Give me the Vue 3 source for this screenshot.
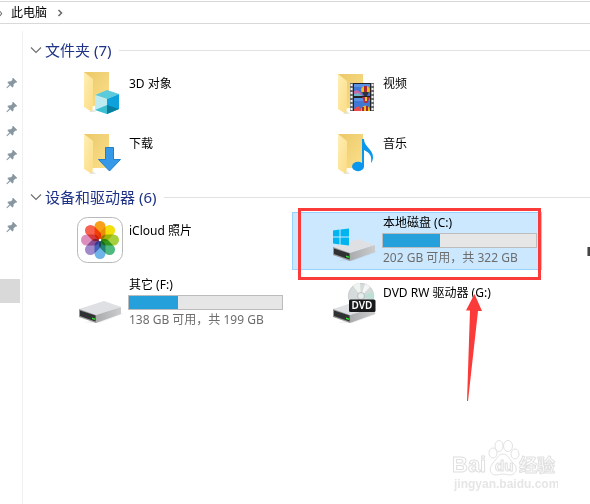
<script setup>
import { ref } from "vue";

const pins = 7;

const folders = [
  { name: "3D 对象", icon: "cube", view: "0 0 48 48" },
  { name: "视频", icon: "video", view: "0 -2 48 48" },
  { name: "下载", icon: "download", view: "0 -2 48 48" },
  { name: "音乐", icon: "music", view: "0 -2 48 48" },
];

const devices = [
  { name: "iCloud 照片", icon: "photos" },
  { name: "本地磁盘 (C:)", icon: "system", used: 37, info: "202 GB 可用，共 322 GB", marked: true },
  { name: "其它 (F:)", icon: "drive", used: 32, info: "138 GB 可用，共 199 GB" },
  { name: "DVD RW 驱动器 (G:)", icon: "dvd", arrow: true },
];

const petals = ["#f9a01b", "#f2df0c", "#a5cf3c", "#4fba80", "#6fb4e8", "#a08acb", "#dc8fbd", "#f7634f"];

const selected = ref("本地磁盘 (C:)");
const showFolders = ref(true);
const showDevices = ref(true);
</script>

<template>
  <div class="explorer">
    <nav class="address">
      <span class="address-edge">›</span>
      <a class="address-link" href="#">此电脑</a>
      <svg class="address-arrow" viewBox="0 0 6 8">
        <path d="M1.5 1 4.5 4 1.5 7" fill="none" stroke="#6b6b6b" stroke-width="1.6" />
      </svg>
    </nav>

    <div class="body">
      <aside class="sidebar">
        <svg v-for="n in pins" :key="n" class="pin" viewBox="0 0 12 12">
          <path
            d="M7 1 11 5 9.8 5.6 9.3 5.4 7.4 7.3 7.2 9.6 6.4 10.2 4.3 8 1.2 11 .8 10.6 3.6 7.4 1.7 5.5 2.5 4.7 5 4.6 6.7 2.8 6.4 2z"
            fill="#8796a0"
            stroke="#8796a0"
            stroke-width=".5"
          />
        </svg>
        <div class="sidebar-current"></div>
      </aside>

      <main class="content">
        <section class="group">
          <h2 class="group-title">
            <button class="group-toggle" type="button" :aria-expanded="showFolders" @click="showFolders = !showFolders">
              <svg class="chevron" viewBox="0 0 12 8">
                <path d="M1 1.5 6 6.5 11 1.5" fill="none" stroke="#6d6d6d" stroke-width="1.1" />
              </svg>
              文件夹 (7)
            </button>
          </h2>
          <div v-if="showFolders" class="items">
            <button
              v-for="folder in folders"
              :key="folder.name"
              class="item"
              :class="{ selected: selected === folder.name }"
              type="button"
              @click="selected = folder.name"
            >
              <svg class="icon" :viewBox="folder.view">
                <defs>
                  <linearGradient :id="'back-' + folder.icon" x1="0" y1="0" x2="1" y2="1">
                    <stop offset="0" stop-color="#ebc868" />
                    <stop offset="1" stop-color="#fbe08c" />
                  </linearGradient>
                  <linearGradient :id="'flap-' + folder.icon" x1="0" y1="0" x2="1" y2="1">
                    <stop offset="0" stop-color="#ffeeb5" />
                    <stop offset="1" stop-color="#fbdc83" />
                  </linearGradient>
                </defs>
                <path d="M13 44h7l-3-3z" fill="#e8e8e8" />
                <path d="M8 4h25v34H8z" :fill="`url(#back-${folder.icon})`" />
                <path d="M8 4 17 11V37L16 44 8 39z" :fill="`url(#flap-${folder.icon})`" />
                <g v-if="folder.icon === 'cube'">
                  <path d="M19 27 31 22 43 26 31 31z" fill="#5bcbdc" />
                  <path d="M19 27 31 31V46L19 42z" fill="#bcecf2" />
                  <path d="M31 31 43 26V41L31 46z" fill="#0da2dc" />
                  <path d="M19 42 31 37V46z" fill="#3dbfd2" />
                  <path d="M31 37 43 41 31 46z" fill="#087f9f" />
                </g>
                <g v-else-if="folder.icon === 'video'">
                  <path d="M20 13h24v28H20z" fill="#6a6a6a" />
                  <path d="M23 13h18v28H23z" fill="#202225" />
                  <path d="M24 14h16v12H24zM24 28h16v13H24z" fill="#3f77d4" />
                  <path d="M24 14h16v3H24zM24 28h16v3H24z" fill="#5c92e6" />
                  <path d="M24 21l3-1 3 2 3 4h-9z" fill="#c967a7" />
                  <path d="M24 24l4-1 4 3h-8z" fill="#6bb8c9" />
                  <path d="M24 39l4-3 5 5h-9z" fill="#ed4b4a" />
                  <ellipse cx="35.5" cy="20" rx="4.5" ry="4" fill="#f2bd20" />
                  <path d="M34 16h3v8h-3z" fill="#aa2834" />
                  <path d="M32 22h7l-2 4h-3z" fill="#343241" />
                  <path d="M32 27h8l-2.5 6h-3z" fill="#b42e43" />
                  <path d="M35 27h2v4h-2z" fill="#f3c929" />
                  <path d="M31 41c0-7 9-7 9 0z" fill="#f0bd22" />
                  <path d="M32 37h2v4h-2zM36 36h2v5h-2z" fill="#a92936" />
                  <path d="M21.5 14v27M42.5 14v27" stroke="#f3f3f3" stroke-width="2" stroke-dasharray="2 2" />
                </g>
                <path
                  v-else-if="folder.icon === 'download'"
                  d="M29.5 17.5h8v12h7L33.5 41 22.5 29.5h7z"
                  fill="#3699e8"
                  stroke="#217fcb"
                />
                <g v-else>
                  <ellipse cx="28" cy="36.5" rx="6" ry="4.7" fill="#0a97ed" />
                  <path d="M32 9h2c0 8 9 10 9 18 0 3-1 5-2 6 1-7-1-10-7-13v17h-2z" fill="#0a97ed" />
                </g>
              </svg>
              <span class="details">
                <span class="name">{{ folder.name }}</span>
              </span>
            </button>
          </div>
        </section>

        <section class="group">
          <h2 class="group-title">
            <button class="group-toggle" type="button" :aria-expanded="showDevices" @click="showDevices = !showDevices">
              <svg class="chevron" viewBox="0 0 12 8">
                <path d="M1 1.5 6 6.5 11 1.5" fill="none" stroke="#6d6d6d" stroke-width="1.1" />
              </svg>
              设备和驱动器 (6)
            </button>
          </h2>
          <div v-if="showDevices" class="items devices">
            <button
              v-for="device in devices"
              :key="device.name"
              class="item"
              :class="{ selected: selected === device.name }"
              type="button"
              @click="selected = device.name"
            >
              <svg v-if="device.icon === 'photos'" class="icon" viewBox="0 0 48 48">
                <rect x="1.5" y="1.5" width="45" height="45" rx="10" fill="#fff" stroke="#b9b9b9" />
                <g class="petals">
                  <rect
                    v-for="(color, i) in petals"
                    :key="color"
                    x="18.5"
                    y="5"
                    width="11"
                    height="18.5"
                    rx="5.5"
                    :fill="color"
                    :transform="`rotate(${i * 45} 24 24)`"
                  />
                </g>
                <circle cx="24" cy="24" r="1.2" fill="#fff" />
              </svg>
              <svg v-else class="icon" viewBox="0 0 48 48">
                <defs>
                  <linearGradient :id="'side-' + device.icon" x1="0" y1="0" x2="1" y2="0">
                    <stop offset="0" stop-color="#aaabad" />
                    <stop offset="1" stop-color="#cbccce" />
                  </linearGradient>
                </defs>
                <g v-if="device.icon === 'dvd'">
                  <circle cx="31" cy="18" r="12.7" fill="#d5dadb" stroke="#b5babb" stroke-width=".6" />
                  <path d="M31 18 23 8a13 13 0 0 1 7-3z" fill="#eff4ef" />
                  <path d="M31 18 43 14a13 13 0 0 1 0 8z" fill="#bce0d4" />
                  <path d="M31 18 35 6a13 13 0 0 1 5 3z" fill="#f5f7f6" />
                  <circle cx="31" cy="18" r="3.5" fill="#e9ecec" stroke="#aaaeb0" stroke-width=".7" />
                </g>
                <path d="M8 45h15l24-9-4-3z" fill="#000" opacity=".05" />
                <path d="M3 31 28 23 45 29 20 37z" fill="#dfe0e3" />
                <path d="M20 37 45 29V36L20 45z" :fill="`url(#side-${device.icon})`" />
                <path d="M3 31 20 37V45L3 39z" fill="#969799" />
                <path d="M4 32.5 19.5 37.5V43.5L4 38z" fill="#303133" />
                <path d="M16 39.5 19 40.5V42L16 41z" fill="#2ee52b" />
                <path
                  v-if="device.icon === 'system'"
                  d="M3 14.5 9.5 13.5V20.500H3zM10.500 13.500 19 12.500V20.500h-8.500zM3 21.500h6.500V28.500L3 27.500zM10.500 21.500H19V29.500l-8.500-1z"
                  fill="#00b5ef"
                />
                <g v-if="device.icon === 'dvd'">
                  <rect x="19" y="21.5" width="26.5" height="12.5" rx="1.5" fill="#17191b" />
                  <text class="dvd-label" x="32" y="31" text-anchor="middle">DVD</text>
                </g>
              </svg>

              <span class="details" :class="{ full: device.info }">
                <span class="name">{{ device.name }}</span>
                <template v-if="device.info">
                  <span class="bar">
                    <span class="bar-used" :style="{ width: device.used + '%' }"></span>
                  </span>
                  <span class="info">{{ device.info }}</span>
                </template>
              </span>

              <span v-if="device.marked" class="mark"></span>
              <svg v-if="device.arrow" class="arrow" viewBox="0 0 16 107">
                <path d="M8.5 0 16 17 12 17 2 107 1 107 4 16.5 0 16.5z" fill="#fb3a3a" />
              </svg>
            </button>
          </div>
        </section>
      </main>
    </div>

    <span class="edge-handle"></span>

    <svg class="watermark" viewBox="0 0 108 56">
      <g fill="#fff" stroke="#e2e2e2">
        <ellipse cx="43" cy="15" rx="4" ry="5" />
        <ellipse cx="49" cy="8" rx="4" ry="5.5" />
        <ellipse cx="58" cy="8" rx="4.5" ry="5.5" />
        <ellipse cx="65" cy="16" rx="4" ry="5" />
        <path d="M53 16c5 0 6 5 10 9 6 5 3 12-3 12-3 0-4-1-7-1s-4 1-7 1c-6 0-8-6-3-12 4-4 5-9 10-9z" />
      </g>
      <g class="watermark-text">
        <text x="2" y="34" font-size="22">Bai</text>
        <text x="45" y="33" font-size="15">du</text>
        <text x="69" y="34" font-size="18">经验</text>
        <text class="watermark-url" x="4" y="50" font-size="12">jingyan.baidu.com</text>
      </g>
    </svg>
  </div>
</template>

<style>
body {
  background: #fff;
}
</style>

<style scoped>
.explorer {
  position: relative;
  display: flex;
  flex-direction: column;
  box-sizing: border-box;
  min-height: 100vh;
  padding-top: 1px;
  overflow: hidden;
  font-family: "Noto Sans", "Noto Sans CJK SC", sans-serif;
  font-size: 12px;
  line-height: 16px;
  color: #000;
}

.address {
  display: flex;
  align-items: center;
  height: 21px;
  border-top: 1px solid #d9d9d9;
  border-bottom: 1px solid #d9d9d9;
}

.address-edge {
  width: 12px;
  margin-left: -1px;
  color: #6b6b6b;
}

.address-link {
  color: #000;
  text-decoration: none;
}

.address-arrow {
  width: 6px;
  height: 8px;
  margin-left: 10px;
}

.body {
  display: flex;
  flex: 1;
}

.sidebar {
  display: flex;
  flex-direction: column;
  gap: 12px;
  box-sizing: border-box;
  width: 23px;
  margin-top: 7px;
  padding-top: 46px;
  border-right: 1px solid #f0f0f0;
}

.pin {
  width: 12px;
  height: 12px;
  margin-left: 6px;
}

.sidebar-current {
  width: 20px;
  height: 24px;
  margin-top: 34px;
  background: #d9d9d9;
}

.content {
  flex: 1;
  padding-top: 16px;
}

.group {
  margin-bottom: 7px;
}

.group-title {
  display: flex;
  align-items: center;
  gap: 8px;
  margin: 0 0 4px;
  font-weight: 400;
}

.group-title::after {
  content: "";
  flex: 1;
  height: 1px;
  background: #e2e2e2;
}

.group-toggle {
  display: flex;
  align-items: center;
  gap: 3px;
  padding: 0 0 0 7px;
  border: 0;
  background: none;
  font-family: inherit;
  font-size: 15px;
  line-height: 20px;
  color: #1e3287;
}

.chevron {
  width: 12px;
  height: 8px;
}

.items {
  display: grid;
  grid-template-columns: repeat(auto-fill, 250px);
  grid-auto-rows: minmax(56px, auto);
  gap: 4px;
  padding-left: 15px;
}

.devices {
  grid-auto-rows: minmax(57px, auto);
  padding-top: 1px;
}

.item {
  position: relative;
  display: flex;
  align-items: flex-start;
  gap: 4px;
  padding: 3px 4px 3px 37px;
  border: 1px solid transparent;
  background: none;
  font: inherit;
  text-align: left;
  color: inherit;
}

.item:hover {
  background: #e5f3ff;
}

.item.selected {
  border-color: #99d1ff;
  background: #cce8ff;
}

.icon {
  flex: none;
  width: 48px;
  height: 48px;
}

.petals rect {
  mix-blend-mode: multiply;
}

.dvd-label {
  fill: #fff;
  font-size: 10px;
  font-weight: 600;
}

.details {
  display: flex;
  flex: 1;
  flex-direction: column;
  padding-top: 8px;
}

.devices .details {
  padding-top: 7px;
}

.devices .details.full {
  padding-top: 0;
  margin-top: -1px;
}

.name {
  padding-left: 1px;
}

.bar {
  box-sizing: border-box;
  height: 15px;
  margin: 2px 0;
  border: 1px solid #bcbcbc;
  background: #e6e6e6;
}

.bar-used {
  display: block;
  height: 100%;
  background: #26a0da;
}

.info {
  padding-left: 1px;
  color: #6d6d6d;
}

.mark {
  position: absolute;
  top: -5px;
  right: 0;
  bottom: -11px;
  left: 5px;
  border: 3px solid #fb3a3a;
}

.arrow {
  position: absolute;
  top: 19px;
  left: 173px;
  width: 16px;
  height: 107px;
}

.edge-handle {
  position: absolute;
  top: 247px;
  right: 0;
  width: 2px;
  height: 9px;
  border-left: 1px solid #999;
  background: #444;
}

.watermark {
  position: absolute;
  right: 32px;
  bottom: 10px;
  width: 108px;
  height: 56px;
}

.watermark-text {
  fill: #fff;
  stroke: #e0e0e0;
  stroke-width: 1px;
  font-family: "Liberation Sans", "Noto Sans CJK SC", sans-serif;
  font-weight: 700;
}

.watermark-url {
  fill: #e6e6e6;
  stroke: none;
}
</style>
